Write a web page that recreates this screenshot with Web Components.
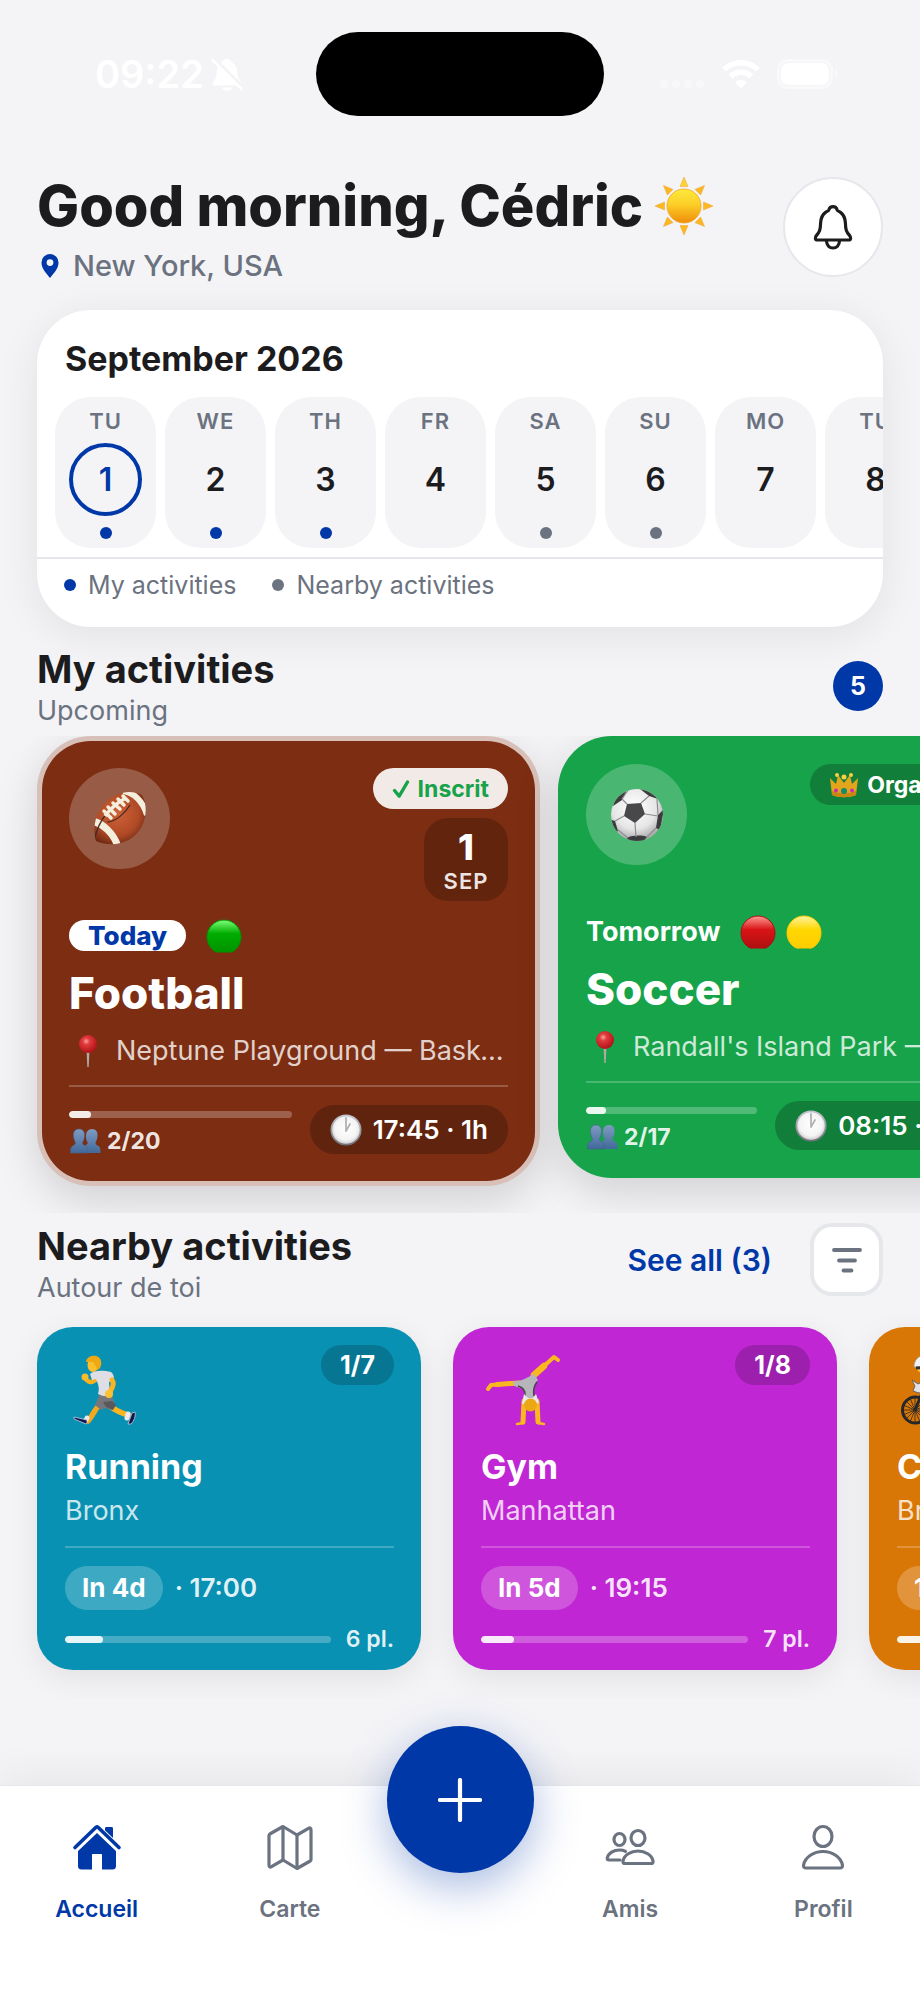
<!DOCTYPE html>
<html lang="en">
<head>
<meta charset="utf-8">
<meta name="viewport" content="width=device-width, initial-scale=1">
<title>Good morning</title>
<style>
  :root {
    --bg: #f4f4f7;
    --ink: #1c1c1e;
    --muted: #6b7280;
    --brand: #0038a8;
    --line: #e5e7eb;
    --gutter: 37px;
  }
  * { box-sizing: border-box; }
  body {
    margin: 0;
    min-height: 100vh;
    display: flex;
    flex-direction: column;
    overflow-x: hidden;
    background: var(--bg);
    color: var(--ink);
    font-family: Inter, "Noto Sans", sans-serif;
  }
  main { flex: 1; min-width: 0; }
</style>
</head>
<body>
<status-bar>09:22</status-bar>
<main>
  <greeting-header>
    Good morning, Cédric
    <span slot="place">New York, USA</span>
  </greeting-header>

  <calendar-card>
    September 2026
    <day-cell slot="days" day="TU" date="1" dot="mine" today></day-cell>
    <day-cell slot="days" day="WE" date="2" dot="mine"></day-cell>
    <day-cell slot="days" day="TH" date="3" dot="mine"></day-cell>
    <day-cell slot="days" day="FR" date="4"></day-cell>
    <day-cell slot="days" day="SA" date="5" dot="near"></day-cell>
    <day-cell slot="days" day="SU" date="6" dot="near"></day-cell>
    <day-cell slot="days" day="MO" date="7"></day-cell>
    <day-cell slot="days" day="TU" date="8"></day-cell>
  </calendar-card>

  <section-header class="mine">
    My activities
    <span slot="sub">Upcoming</span>
    <count-badge slot="actions">5</count-badge>
  </section-header>
  <card-row style="--gap:18px; --pad:0 0 27px">
    <activity-card color="#7c2d12" outlined joined="2" total="20" levels="green" today>
      Football
      <span slot="status">Inscrit</span>
      <span slot="day">1</span><span slot="month">SEP</span>
      <span slot="when">Today</span>
      <span slot="place">Neptune Playground — Basketball Court</span>
      <span slot="time">17:45 · 1h</span>
    </activity-card>
    <activity-card color="#16a34a" organizer joined="2" total="17" levels="red yellow">
      Soccer
      <span slot="status">Organisateur</span>
      <span slot="day">2</span><span slot="month">SEP</span>
      <span slot="when">Tomorrow</span>
      <span slot="place">Randall's Island Park — Field 70</span>
      <span slot="time">08:15 · 1h30m</span>
    </activity-card>
  </card-row>

  <section-header class="nearby">
    Nearby activities
    <span slot="sub">Autour de toi</span>
    <see-all slot="actions">See all (3)</see-all>
    <filter-button slot="actions"></filter-button>
  </section-header>
  <card-row style="--gap:32px; --pad:14px 0 28px">
    <nearby-card color="#0891b2" icon="runner" joined="1" total="7">
      Running
      <span slot="area">Bronx</span><span slot="in">In 4d</span><span slot="time">· 17:00</span>
    </nearby-card>
    <nearby-card color="#c026d3" icon="gymnast" joined="1" total="8">
      Gym
      <span slot="area">Manhattan</span><span slot="in">In 5d</span><span slot="time">· 19:15</span>
    </nearby-card>
    <nearby-card color="#d97706" icon="cyclist" joined="2" total="10">
      Cycling
      <span slot="area">Bronx</span><span slot="in">12 Sep</span><span slot="time">· 09:00</span>
    </nearby-card>
  </card-row>
</main>
<tab-bar></tab-bar>

<script>
const ICONS = {
  bellOff: [32, 34, `<g fill="#fff"><path d="M16 2c2.6 0 4 1.400 4.600 3.200C24.500 7 26 10.500 26.300 15c.3 5 1.200 7 3.200 9.500 1.400 1.800.8 4-1.500 4H4c-2.300 0-2.900-2.200-1.500-4C4.500 22 5.400 20 5.700 15 6 10.500 7.500 7 11.400 5.200 12 3.400 13.400 2 16 2z"/><path d="M11 30.500h10c-.6 2-2.500 3.200-5 3.200s-4.400-1.200-5-3.200z"/></g><path d="M2 1l30 30.500" stroke="#f4f4f7" stroke-width="5"/><path d="M1.500 3l29 29" stroke="#fff" stroke-width="2.500" stroke-linecap="round"/>`],
  bars: [46, 28, `<g fill="#f8f8fb"><circle cx="5" cy="24" r="4"/><circle cx="17" cy="24" r="4"/><circle cx="29" cy="24" r="4"/><circle cx="41" cy="24" r="4"/></g>`],
  wifi: [40, 30, `<g fill="none" stroke="#fff" stroke-width="5.500"><path d="M3 10.500a24.500 24.500 0 0 1 34 0"/><path d="M9.500 17.500a15 15 0 0 1 21 0"/></g><path d="M20 29.500l-6-6.200a9 9 0 0 1 12 0z" fill="#fff"/>`],
  battery: [62, 30, `<rect x="1.500" y="1.500" width="53" height="27" rx="9" fill="none" stroke="#f9f9fb" stroke-width="3"/><rect x="4" y="4" width="48" height="22" rx="7" fill="#fff"/><path d="M58 10.500c4 1.500 4 7.500 0 9z" fill="#f9f9fb"/>`],
  sun: [58, 58, `<defs><linearGradient id="s" x1="0" y1="0" x2="0" y2="1"><stop offset="0" stop-color="#fdea3c"/><stop offset=".45" stop-color="#fccf28"/><stop offset="1" stop-color="#f08c0a"/></linearGradient></defs><g transform="translate(-1 -1)"><g fill="#fbb81f" stroke="#f0a040" stroke-width=".5"><path d="M26 10.500L30 1l4 9.500z" fill="#f9d42c"/><path d="M26 10.500L30 1l4 9.500z" transform="rotate(45 30 30)"/><path d="M26 10.500L30 1l4 9.500z" transform="rotate(90 30 30)"/><path d="M26 10.500L30 1l4 9.500z" transform="rotate(135 30 30)"/><path d="M26 10.500L30 1l4 9.500z" transform="rotate(180 30 30)"/><path d="M26 10.500L30 1l4 9.500z" transform="rotate(225 30 30)"/><path d="M26 10.500L30 1l4 9.500z" transform="rotate(270 30 30)"/><path d="M26 10.500L30 1l4 9.500z" transform="rotate(315 30 30)"/></g><circle cx="30" cy="30" r="17" fill="url(#s)" stroke="#f3a321" stroke-width=".8"/></g>`],
  pinMark: [18, 26, `<path d="M9 1a8.500 8.500 0 0 1 8.500 8.700C17.500 16 12 21 9 25 6 21 .5 16 .5 9.700A8.500 8.500 0 0 1 9 1zm0 5.200a3.400 3.400 0 1 0 0 6.800 3.400 3.400 0 0 0 0-6.800z" fill="#0038a8" fill-rule="evenodd"/>`],
  bell: [40, 46, `<g fill="none" stroke="#1c1c1e" stroke-width="3.200" stroke-linejoin="round" stroke-linecap="round"><path d="M20 2.600c-2.300 0-3.600 1.300-4.200 3.300-.4 1.200-1.800 1.300-3 2.200C9.300 10.600 7.800 14 7.600 19c-.2 7-1 8.800-4.100 12.400-1.800 2.100-1.600 4.600 1 4.600h31c2.600 0 2.800-2.500 1-4.600C33.400 27.800 32.600 26 32.400 19c-.2-5-1.700-8.400-5.200-10.900-1.200-.9-2.600-1-3-2.200-.6-2-1.900-3.300-4.200-3.300z"/><path d="M13.500 37c.2 4.200 2.900 7 6.500 7s6.300-2.800 6.500-7"/></g>`],
  check: [18, 20, `<path d="M2.500 11.500l4.700 5.700L15.500 3" fill="none" stroke="#16a34a" stroke-width="3.400" stroke-linecap="round" stroke-linejoin="round"/>`],
  football: [56, 56, `<defs><radialGradient id="f" cx=".45" cy=".4" r=".65"><stop offset="0" stop-color="#cf6238"/><stop offset=".6" stop-color="#b04a26"/><stop offset="1" stop-color="#5e200c"/></radialGradient><clipPath id="fc"><path d="M4 50C-1 32 6 14 22 5 32 0 42 0 50 4c5 9 5 20 0 31C42 51 22 58 4 50z"/></clipPath></defs><g clip-path="url(#fc)"><rect width="56" height="56" fill="url(#f)"/><path d="M0 30c10 2 22 12 26 26" fill="none" stroke="#f4eedd" stroke-width="7"/><path d="M31 0c10 1 20 10 24 24" fill="none" stroke="#f4eedd" stroke-width="6"/><path d="M2 52C4 38 9 29 15 22M15 31c9 0 19-10 23-17" fill="none" stroke="#3e2a22" stroke-width="1.200"/></g><path d="M13 25c6-8 13-14 21-18" fill="none" stroke="#f4eedd" stroke-width="3.500"/><path d="M12 20l7 7M16 16l7 7M21 12l7 6M26 8l6 6M31 5l5 5" stroke="#f4eedd" stroke-width="3.500" stroke-linecap="round"/>`],
  soccer: [56, 56, `<defs><radialGradient id="b" cx=".45" cy=".35" r=".7"><stop offset="0" stop-color="#fff"/><stop offset=".6" stop-color="#e6e6e6"/><stop offset="1" stop-color="#989898"/></radialGradient><clipPath id="bc"><circle cx="28" cy="28" r="26"/></clipPath></defs><circle cx="28" cy="28" r="26" fill="url(#b)"/><g clip-path="url(#bc)"><path d="M18 17l14-1 4 11-10 9-11-7z" fill="#48484a"/><path d="M6 9l12-6-5 10-9 6zM31 2c8 0 15 5 18 10l-9-3zM55 22l-6 6-2 13 4 2zM0 32l6 2 3 10-4 2zM18 51c5-3 15-3 20-1l-6 7H20z" fill="#3c3c3e"/><path d="M18 17l-5-5M32 16l8-7M36 27l13 2M26 36l1 14M15 29l-9 5M47 41l-9 9M9 43l10 8M13 12L20 2M49 28l-1-16" fill="none" stroke="#8e8e90" stroke-width="1.200"/></g>`],
  runner: [80, 84, `<g fill="none" stroke-linecap="round" stroke-linejoin="round"><path d="M43 60c7 5 13 8 20 10" stroke="#f9b422" stroke-width="5.500"/><path d="M35 60c-5 3-6 9-12 16" stroke="#f5a81c" stroke-width="5.500"/><path d="M22 73l-1 2M63 69l-1 4" stroke="#e9e9ee" stroke-width="5"/></g><path d="M9 72l13 3v3l-1 1-12-5zM63 79l4-11 3-1c1 4-1 9-4 12z" fill="#10194f" stroke="#c9cddd" stroke-width=".8"/><path d="M35 48l12 3 3 9-3 5-7-2-4 2-6-5z" fill="#77777b"/><path d="M38 57l3 5 7 3 3-5-4-4z" fill="#59595d"/><path d="M20 33c5 7 9 4 14-2" fill="none" stroke="#f7b01e" stroke-width="4.500" stroke-linecap="round"/><circle cx="20" cy="32" r="3.500" fill="#fabb2c"/><path d="M25 29c4-4 13-4 21-2 3 3 3 5 3 8l-5 2 1 13c-4 2-8 1-12-1 2-6 0-10-2-15l-4 1z" fill="#dedee4"/><path d="M47 35c3 4 0 8-3 14" fill="none" stroke="#f9b422" stroke-width="5" stroke-linecap="round"/><circle cx="44" cy="49" r="4" fill="#fcc133"/><ellipse cx="28" cy="20" rx="5.500" ry="7" fill="#fbc02d"/><path d="M21 17c1-8 14-8 15-1 1 5-1 8-4 9-1-4-3-6-4-8z" fill="#eda914"/>`],
  gymnast: [80, 84, `<g fill="none" stroke="#f9b81f" stroke-linecap="round" stroke-linejoin="round"><path d="M34 38l-24 2-3 4" stroke-width="4"/><path d="M38 38l-22 1.500" stroke-width="5"/><path d="M53 30l20-18 4 3" stroke-width="4"/><path d="M53 30l10-9" stroke-width="6.500"/><path d="M43 56l-1 21M56 56l1 21" stroke-width="5"/><path d="M36 79l7-1M57 78l6 1" stroke-width="2.500"/></g><path d="M32 36c8 1 13-3 21-7l4 6c-4 4-5 9-4 15l4 8H41l3-9c0-5-4-6-11-8z" fill="#b5b5ba"/><path d="M37 41c6 2 8 5 7 10M56 37c-3 4-4 9-3 14" fill="none" stroke="#46464a" stroke-width="1.500"/><path d="M43 49l4 4h5l3-4 3 9-4 1H41z" fill="#e9e9ee"/><circle cx="49.500" cy="60" r="6.500" fill="#eca714"/>`],
  cyclist: [80, 84, `<g fill="none" stroke="#27272a"><circle cx="18.500" cy="65" r="13" stroke-width="3"/><circle cx="62" cy="65" r="13" stroke-width="3"/><path d="M18 52v26M5 65h26M9 56l18 18M27 56L9 74M13 53l10 24M6 60l24 10M23 53L13 77M6 70l24-10" stroke-width=".8"/><path d="M18 65l8-19 12 19 14-17 10 17H38" stroke-width="3"/></g><path d="M15 35l6 4 9-4v10l-8 3-6-2 2-5z" fill="#e4e4e8" stroke="#55555a" stroke-width=".8"/><path d="M26 36l16-10 14 12-4 12-12-1" fill="#d7d7dc"/><path d="M50 48L36 56l3 14" fill="none" stroke="#f7b01e" stroke-width="6"/><circle cx="26" cy="21" r="7" fill="#fbc02d"/><path d="M17 22c0-14 18-16 21-3l-3 4z" fill="#f2f2f4" stroke="#9a9aa0" stroke-width=".8"/><path d="M19 23l12-1" stroke="#333" stroke-width="3"/>`],
  pushpin: [36, 36, `<defs><radialGradient id="p" cx=".4" cy=".35" r=".65"><stop offset="0" stop-color="#f6a3a3"/><stop offset=".3" stop-color="#e23a3c"/><stop offset="1" stop-color="#b01319"/></radialGradient></defs><path d="M17.500 17h3l-.8 17h-1.400z" fill="#b0a9a6"/><circle cx="19" cy="11" r="9" fill="url(#p)"/>`],
  people: [32, 26, `<defs><linearGradient id="g" x1="0" y1="0" x2="0" y2="1"><stop offset="0" stop-color="#7f9cc0"/><stop offset="1" stop-color="#41699b"/></linearGradient></defs><path d="M23 1c4 0 6 3 5.500 7-.2 3-1 5-2 6.500 0 2 1 2.500 3 3.500 1.800 1 2 3 2 7H16V18l3-3c-1.500-2-2-4-2-7 0-4 2-7 6-7z" fill="url(#g)"/><path d="M10 1c4 0 6 3 5.500 7-.2 3-1 5-2 6.500 0 2 1 2.500 3 3.500 1.800 1 2 3 2 7H1.500c0-4 .2-6 2-7 2-1 3-1.500 3-3.500-1-1.500-1.800-3.500-2-6.500C4 4 6 1 10 1z" fill="url(#g)" stroke="#47628a" stroke-width=".6"/>`],
  clock: [32, 32, `<defs><linearGradient id="c" x1="0" y1="0" x2="0" y2="1"><stop offset="0" stop-color="#c3c6d0"/><stop offset="1" stop-color="#6f7178"/></linearGradient><radialGradient id="d" cx=".5" cy=".45" r=".55"><stop offset="0" stop-color="#fff"/><stop offset=".75" stop-color="#f4f4f4"/><stop offset="1" stop-color="#cfcfcf"/></radialGradient></defs><circle cx="16" cy="16" r="15.500" fill="url(#c)"/><circle cx="16" cy="16" r="13.800" fill="url(#d)"/><path d="M16 17V4M16 17l4-7" stroke="#b2b2b4" stroke-width="1.800" stroke-linecap="round"/>`],
  crown: [30, 26, `<path d="M3 23L1 6l6 6 2-9 6 8 6-8 2 9 6-6-2 17c-7 3-17 3-24 0z" fill="#e2a51c"/><path d="M3 19c7 3 17 3 24 0v4c-7 3-17 3-24 0z" fill="#c98712"/><g fill="#f7d044"><circle cx="15" cy="5" r="2.500"/><circle cx="8" cy="3" r="2"/><circle cx="22" cy="3" r="2"/></g><circle cx="15" cy="19" r="3" fill="#128a6b"/><circle cx="7" cy="18.500" r="2" fill="#c92bb0"/><circle cx="23" cy="18.500" r="2" fill="#c92bb0"/>`],
  green: ["#7dff7a", "#00ad00", "#009100"],
  red: ["#ff9a94", "#d91416", "#ab0f10"],
  yellow: ["#fff3a0", "#ffd700", "#ffcb00"],
  filter: [32, 28, `<g stroke="#6b7280" stroke-width="3.800" stroke-linecap="round"><path d="M3 4h26M8 14.500h16M12.500 24.500h8"/></g>`],
  home: [50, 48, `<g fill="#0038a8"><path d="M33 5.500c0-1 .7-1.500 1.500-1.500h5c1 0 1.500.6 1.500 1.500V20l-8-7.500z"/><path d="M25 10L6 28v15c0 2 1 3.500 3.500 3.500H20V32c0-.7.400-1 1-1h8c.6 0 1 .3 1 1v14.500h10.500c2.500 0 3.500-1.500 3.500-3.500V28z"/></g><path d="M3 25.500L25 4.500l22 21" fill="none" stroke="#fff" stroke-width="7"/><path d="M3 24.500L24 4.300q1-.8 2 0l21 20.200" fill="none" stroke="#0038a8" stroke-width="3.600" stroke-linecap="round" stroke-linejoin="round"/>`],
  map: [48, 48, `<g fill="none" stroke="#6b7280" stroke-width="3.200" stroke-linejoin="round" stroke-linecap="round"><path d="M17 3.500L3.800 11q-.8.500-.8 1.500V42c0 2 1 2.500 2.500 1.700L17 37l14 8.500L44.200 38q.8-.5.8-1.500V7c0-2-1-2.500-2.500-1.700L31 12z"/><path d="M17 4v33M31 12v33"/></g>`],
  friends: [50, 48, `<g fill="none" stroke="#6b7280" stroke-width="3.200" stroke-linejoin="round" stroke-linecap="round"><ellipse cx="33" cy="15" rx="7" ry="7.500"/><path d="M20 40.500c-1.500 0-2.300-.8-2-2.500 1-6 8-10 15-10s14 4 15 10c.3 1.700-.5 2.500-2 2.500z"/><ellipse cx="14.500" cy="16.500" rx="5.500" ry="6"/><path d="M15 37H4c-1.500 0-2-.8-1.700-2 1-5 6.500-8 12.200-8 2.200 0 4.500.5 6 1.300"/></g>`],
  person: [48, 48, `<g fill="none" stroke="#6b7280" stroke-width="3.200" stroke-linejoin="round"><ellipse cx="24" cy="13.500" rx="9" ry="10"/><path d="M7 45c-1.800 0-2.700-1-2.400-3C6 34 15 28.500 24 28.500S42 34 43.400 42c.3 2-.6 3-2.400 3z"/></g>`],
  plus: [44, 44, `<path d="M22 2v40M2 22h40" stroke="#fff" stroke-width="4.200" stroke-linecap="round"/>`]
};
// The glossy level dots share one drawing and differ only in colour.
for (const name of ["green", "red", "yellow"]) {
  const [top, mid, low] = ICONS[name];
  ICONS[name] = [36, 34, `<defs><linearGradient id="l" x1="0" y1="0" x2="0" y2="1"><stop offset="0" stop-color="${top}"/><stop offset=".4" stop-color="${mid}"/><stop offset="1" stop-color="${low}"/></linearGradient><clipPath id="k"><path d="M0 0h36v33.500H0z"/></clipPath></defs><circle cx="18" cy="18" r="17" fill="url(#l)" stroke="${low}" stroke-width="1" clip-path="url(#k)"/>`];
}

class Base extends HTMLElement {
  constructor() {
    super();
    this.attachShadow({ mode: "open" });
  }
  connectedCallback() {
    this.shadowRoot.innerHTML = `<style>*{box-sizing:border-box}${this.css()}</style>${this.html()}`;
  }
  a(name) { return this.getAttribute(name) || ""; }
}
const define = (name, css, html) => customElements.define(name, class extends Base {
  css() { return typeof css === "function" ? css(this) : css; }
  html() { return typeof html === "function" ? html(this) : html; }
});

define("app-icon", ":host{display:block;flex:none}svg{display:block}", el => {
  const [w, h, body] = ICONS[el.a("name")];
  return `<svg width="${w}" height="${h}" viewBox="0 0 ${w} ${h}" aria-hidden="true">${body}</svg>`;
});

define("status-bar", `
  :host{display:grid;grid-template-columns:1fr auto 1fr;align-items:center;padding:32px 81px 61px 95px;color:#fff}
  .time{display:flex;align-items:center;gap:7px;font-size:38px;line-height:46px;font-weight:600}
  .island{width:288px;height:84px;border-radius:42px;background:#000;margin-right:14px;justify-self:center}
  .sys{display:flex;align-items:center;justify-content:flex-end;gap:16px}`,
  `<div class="time"><slot></slot><app-icon name="bellOff"></app-icon></div>
   <div class="island"></div>
   <div class="sys"><app-icon name="bars"></app-icon><app-icon name="wifi"></app-icon><app-icon name="battery"></app-icon></div>`);

define("greeting-header", `
  :host{display:flex;justify-content:space-between;align-items:flex-start;padding:0 var(--gutter) 27px}
  h1{display:flex;align-items:center;gap:12px;margin:0 0 14px;font-size:56px;line-height:58px;font-weight:800;white-space:nowrap}
  p{display:flex;align-items:center;gap:14px;margin:0;padding-left:4px;font-size:29px;line-height:34px;font-weight:500;color:var(--muted)}
  button{width:100px;height:100px;display:grid;place-items:center;padding:0;border:2px solid var(--line);border-radius:50%;background:#fff}`,
  `<div><h1><span><slot></slot></span><app-icon name="sun"></app-icon></h1>
   <p><app-icon name="pinMark"></app-icon><slot name="place"></slot></p></div>
   <button type="button" aria-label="Notifications"><app-icon name="bell"></app-icon></button>`);

define("calendar-card", `
  :host{display:block;margin:0 var(--gutter);padding:28px 0 26px;overflow:hidden;border-radius:54px;background:#fff;box-shadow:0 8px 44px rgba(0,0,0,.08)}
  h2{margin:0 28px 17px;font-size:34px;line-height:42px;font-weight:700}
  .days{display:flex;gap:9px;padding:0 18px 9px;overflow:hidden}
  .legend{display:flex;gap:36px;padding:10px 27px 0;border-top:2px solid var(--line);font-size:25px;line-height:32px;color:var(--muted)}
  .legend span{display:flex;align-items:center;gap:12px}
  i{width:12px;height:12px;border-radius:50%;background:var(--brand)}
  .near{background:var(--muted)}`,
  `<h2><slot></slot></h2><div class="days"><slot name="days"></slot></div>
   <div class="legend"><span><i></i>My activities</span><span><i class="near"></i>Nearby activities</span></div>`);

define("day-cell", `
  :host{display:block;flex:none}
  button{display:flex;flex-direction:column;align-items:center;width:101px;padding:10px 0 9px;border:0;border-radius:36px;background:var(--bg);font:inherit;color:inherit}
  .day{font-size:22px;line-height:28px;font-weight:600;letter-spacing:1px;color:var(--muted)}
  .date{display:grid;place-items:center;width:73px;height:73px;margin:8px 0 11px;font-size:32px;font-weight:600;border-radius:50%}
  :host([today]) .date{border:4px solid var(--brand);color:var(--brand)}
  i{width:12px;height:12px;border-radius:50%}
  :host([dot=mine]) i{background:var(--brand)}
  :host([dot=near]) i{background:var(--muted)}`,
  el => `<button type="button"><span class="day">${el.a("day")}</span><span class="date">${el.a("date")}</span><i></i></button>`);

define("section-header", `
  :host{display:flex;justify-content:space-between;align-items:flex-start;padding:10px var(--gutter) 6px}
  :host(.mine){padding-top:19px}
  h2{margin:0;font-size:38px;line-height:46px;font-weight:700}
  p{margin:0;font-size:27px;line-height:38px;color:var(--muted)}
  .actions{display:flex;align-items:center;gap:38px;min-height:73px}
  :host(.mine) .actions{min-height:80px}`,
  `<div><h2><slot></slot></h2><p><slot name="sub"></slot></p></div><div class="actions"><slot name="actions"></slot></div>`);

define("count-badge", `:host{display:grid;place-items:center;width:50px;height:50px;border-radius:50%;background:var(--brand);color:#fff;font-size:25px;font-weight:700}`, `<slot></slot>`);
define("see-all", `:host{display:block}a{color:var(--brand);font-size:30px;line-height:36px;font-weight:600;text-decoration:none}`, `<a href="#all"><slot></slot></a>`);
define("filter-button", `:host{display:block}button{display:grid;place-items:center;width:73px;height:73px;padding:0;border:4px solid var(--line);border-radius:22px;background:#fff}`,
  `<button type="button" aria-label="Filter"><app-icon name="filter"></app-icon></button>`);

define("card-row", `
  :host{display:flex;align-items:flex-start;gap:var(--gap);padding:var(--pad);overflow-x:auto;overflow-y:hidden;scrollbar-width:none}
  :host::before{content:"";flex:none;width:var(--gutter);margin-right:calc(0px - var(--gap))}`, `<slot></slot>`);

define("progress-bar", el => `
  :host{display:block;flex:1;height:7px;border-radius:4px;background:rgba(255,255,255,.25);overflow:hidden}
  div{width:${el.a("value")}%;height:7px;border-radius:4px;background:rgba(255,255,255,.88)}`,
  el => `<div role="progressbar" aria-label="Places taken" aria-valuenow="${Math.round(el.a("value"))}"></div>`);

define("activity-card", el => `
  :host{display:block;flex:none;width:503px;padding:28px;border-radius:54px;background:${el.a("color")};color:#fff;box-shadow:0 14px 44px rgba(0,0,0,.15)}
  :host([outlined]){padding:27px;border:5px solid rgba(255,255,255,.7)}
  .top{display:flex;justify-content:space-between;align-items:flex-start}
  .disc{display:grid;place-items:center;width:101px;height:101px;border-radius:50%;background:rgba(255,255,255,.22)}
  .side{display:flex;flex-direction:column;align-items:flex-end;gap:9px}
  .status{display:flex;align-items:center;gap:8px;height:41px;padding:0 19px;border-radius:21px;font-size:23px;font-weight:700;background:rgba(255,255,255,.9);color:#16a34a}
  :host([organizer]) .status{background:rgba(0,0,0,.22);color:#fff}
  .date{display:flex;flex-direction:column;align-items:center;width:84px;padding:10px 0 6px;border-radius:24px;background:rgba(0,0,0,.2)}
  .date b{font-size:36px;line-height:39px;font-weight:800}
  .date small{font-size:22px;line-height:28px;font-weight:600;letter-spacing:1px;opacity:.88}
  .when{display:flex;align-items:center;height:33px;margin:18px 0 14px;font-size:27px;font-weight:700}
  :host([today]) .when b{padding:0 19px;border-radius:16px;background:#fff;color:var(--brand);font-size:26px;line-height:31px;font-weight:800}
  .when b{margin-right:20px;font-weight:700}
  .when app-icon{margin-right:10px}
  h3{margin:0 0 13px;font-size:44px;line-height:54px;font-weight:800}
  .place{display:flex;align-items:center;gap:11px;font-size:27px;line-height:36px;color:rgba(255,255,255,.8)}
  .place span{overflow:hidden;text-overflow:ellipsis;white-space:nowrap}
  .foot{display:flex;gap:18px;margin-top:16px;padding-top:18px;border-top:2px solid rgba(255,255,255,.22)}
  .fill{flex:1;display:flex;flex-direction:column;gap:10px;padding-top:6px}
  .fill progress-bar{flex:none}
  .fill p{display:flex;align-items:center;gap:6px;margin:0;font-size:23px;line-height:26px;font-weight:700;color:rgba(255,255,255,.9)}
  .time{display:flex;align-items:center;gap:11px;height:49px;padding:0 20px;border-radius:25px;background:rgba(0,0,0,.22);font-size:26px;font-weight:600;white-space:nowrap}`,
  el => `<div class="top"><div class="disc"><app-icon name="${el.hasAttribute("organizer") ? "soccer" : "football"}"></app-icon></div>
    <div class="side"><div class="status"><app-icon name="${el.hasAttribute("organizer") ? "crown" : "check"}"></app-icon><slot name="status"></slot></div>
    <div class="date"><b><slot name="day"></slot></b><small><slot name="month"></slot></small></div></div></div>
    <div class="when"><b><slot name="when"></slot></b>${el.a("levels").split(" ").map(l => `<app-icon name="${l}"></app-icon>`).join("")}</div>
    <h3><slot></slot></h3>
    <div class="place"><app-icon name="pushpin"></app-icon><span><slot name="place"></slot></span></div>
    <div class="foot"><div class="fill"><progress-bar value="${100 * el.a("joined") / el.a("total")}"></progress-bar>
    <p><app-icon name="people"></app-icon>${el.a("joined")}/${el.a("total")}</p></div>
    <div class="time"><app-icon name="clock"></app-icon><slot name="time"></slot></div></div>`);

define("nearby-card", el => `
  :host{display:block;flex:none;width:384px;padding:18px 27px 17px 28px;border-radius:36px;background:${el.a("color")};color:#fff;box-shadow:0 8px 32px rgba(0,0,0,.08)}
  .top{display:flex;justify-content:space-between;align-items:flex-start;margin-bottom:16px}
  .count{padding:0 19px;border-radius:20px;background:rgba(0,0,0,.18);font-size:25px;line-height:40px;font-weight:700}
  h3{margin:0 0 4px;font-size:34px;line-height:44px;font-weight:700}
  .area{margin:0;padding-bottom:17px;border-bottom:2px solid rgba(255,255,255,.22);font-size:27px;line-height:36px;color:rgba(255,255,255,.8)}
  .when{display:flex;align-items:center;gap:12px;margin:18px 0 15px;font-size:26px;line-height:44px;font-weight:600;color:rgba(255,255,255,.9)}
  .when b{padding:0 17px;border-radius:22px;background:rgba(255,255,255,.22);color:#fff;font-weight:700}
  .left{display:flex;align-items:center;gap:15px;font-size:23px;line-height:28px;font-weight:600;color:rgba(255,255,255,.9)}`,
  el => `<div class="top"><app-icon name="${el.a("icon")}"></app-icon><span class="count">${el.a("joined")}/${el.a("total")}</span></div>
    <h3><slot></slot></h3><p class="area"><slot name="area"></slot></p>
    <div class="when"><b><slot name="in"></slot></b><slot name="time"></slot></div>
    <div class="left"><progress-bar value="${100 * el.a("joined") / el.a("total")}"></progress-bar><span>${el.a("total") - el.a("joined")} pl.</span></div>`);

define("tab-item", `
  :host{display:block;flex:1}
  a{display:flex;flex-direction:column;align-items:center;gap:24px;padding:37px 0 77px;color:var(--muted);font-size:23px;line-height:28px;font-weight:600;text-decoration:none}
  :host([active]) a{color:var(--brand)}`,
  el => `<a href="#${el.a("icon")}"><app-icon name="${el.a("icon")}"></app-icon><slot></slot></a>`);

define("tab-bar", `
  :host{display:block}
  nav{display:flex;align-items:flex-start;border-top:1px solid var(--line);background:#fff;box-shadow:0 -4px 44px rgba(0,0,0,.07)}
  button{flex:none;display:grid;place-items:center;width:147px;height:147px;margin-top:-60px;padding:0;border:0;border-radius:50%;background:var(--brand);box-shadow:0 14px 46px rgba(0,56,168,.35)}`,
  `<nav><tab-item icon="home" active>Accueil</tab-item><tab-item icon="map">Carte</tab-item>
   <button type="button" aria-label="New activity"><app-icon name="plus"></app-icon></button>
   <tab-item icon="friends">Amis</tab-item><tab-item icon="person">Profil</tab-item></nav>`);
</script>
</body>
</html>
